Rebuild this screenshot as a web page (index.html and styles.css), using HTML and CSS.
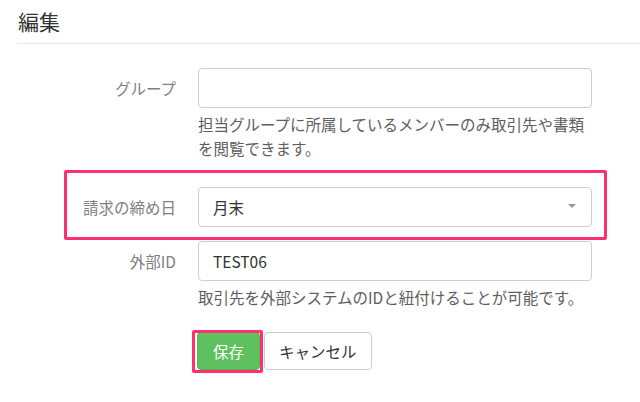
FILE: index.html
```html
<!DOCTYPE html>
<html lang="ja">
<head>
<meta charset="utf-8">
<link rel="stylesheet" href="styles.css">
</head>
<body>
<div class="page">
  <h1 class="title">編集</h1>
  <form class="form">
    <div class="row row-first">
      <label class="label">グループ</label>
      <div class="control">
        <input class="input" type="text" value="">
        <p class="help">担当グループに所属しているメンバーのみ取引先や書類を閲覧できます。</p>
      </div>
    </div>
    <div class="row row-mark">
      <label class="label">請求の締め日</label>
      <div class="control">
        <div class="select"><span>月末</span><span class="caret"></span></div>
      </div>
    </div>
    <div class="row row-ext">
      <label class="label">外部ID</label>
      <div class="control">
        <input class="input" type="text" value="TEST06">
        <p class="help">取引先を外部システムのIDと紐付けることが可能です。</p>
      </div>
    </div>
    <div class="row row-actions">
      <span class="label"></span>
      <div class="actions">
        <span class="mark-btn"><button type="button" class="btn btn-save">保存</button></span>
        <button type="button" class="btn btn-cancel">キャンセル</button>
      </div>
    </div>
  </form>
</div>
</body>
</html>
```
FILE: styles.css
```css
html, body {
  margin: 0;
  padding: 0;
  background: #fff;
}
body {
  font-family: "Noto Sans CJK JP", "Noto Sans", sans-serif;
  color: #333;
  width: 640px;
  height: 402px;
  overflow: hidden;
}
.page {
  padding-left: 17px;
}
.title {
  margin: 0;
  font-size: 21px;
  font-weight: normal;
  line-height: 30px;
  padding: 6px 0 7px 1px;
  border-bottom: 1px solid #e6e6e6;
  color: #333;
}
.form {
  margin: 0;
  padding-top: 24px;
  width: 575px;
}
.row {
  display: grid;
  grid-template-columns: 159px 394px;
  column-gap: 22px;
  align-items: start;
}
.row-mark {
  position: relative;
  margin-top: 27px;
}
.row-mark::after {
  content: "";
  position: absolute;
  top: -17px;
  bottom: -13px;
  left: 47px;
  right: -15px;
  border: 3px solid #ff3070;
  border-radius: 2px;
  pointer-events: none;
}
.row-ext {
  margin-top: 14px;
}
.row-actions {
  margin-top: 23px;
}
.label {
  display: block;
  text-align: right;
  font-size: 15.5px;
  line-height: 40px;
  color: #808080;
}
.control {
  display: flex;
  flex-direction: column;
}
.input, .select {
  box-sizing: border-box;
  height: 40px;
  width: 394px;
  margin: 0;
  border: 1px solid #cfcfcf;
  border-radius: 4px;
  background: #fff;
  font-family: "Noto Sans CJK JP", "Noto Sans", sans-serif;
  font-size: 15.5px;
  color: #333;
  padding: 0 14px;
  outline: none;
}
.select {
  display: flex;
  align-items: center;
  justify-content: space-between;
  padding-right: 15px;
}
.caret {
  width: 0;
  height: 0;
  border-left: 4px solid transparent;
  border-right: 4px solid transparent;
  border-top: 4px solid #999;
  margin-top: -3px;
}
.help {
  margin: 4px 0 0;
  font-size: 15.5px;
  line-height: 24px;
  color: #5e5e5e;
}
.actions {
  display: flex;
  align-items: center;
  margin-left: -1px;
}
.mark-btn {
  position: relative;
  display: inline-flex;
  margin-right: 4px;
}
.mark-btn::after {
  content: "";
  position: absolute;
  top: -2px;
  bottom: -3px;
  left: -5px;
  right: -3px;
  border: 3px solid #ff3070;
  border-radius: 2px;
  pointer-events: none;
}
.btn {
  box-sizing: border-box;
  height: 38px;
  padding: 0 15px;
  border-radius: 4px;
  font-family: "Noto Sans CJK JP", "Noto Sans", sans-serif;
  font-size: 15.5px;
  line-height: 36px;
  cursor: pointer;
  margin: 0;
}
.btn-save {
  background: #5fc05f;
  border: 1px solid #56b456;
  color: #fff;
}
.btn-cancel {
  background: #fff;
  border: 1px solid #cccccc;
  color: #333;
  padding: 0 14px;
}
```
